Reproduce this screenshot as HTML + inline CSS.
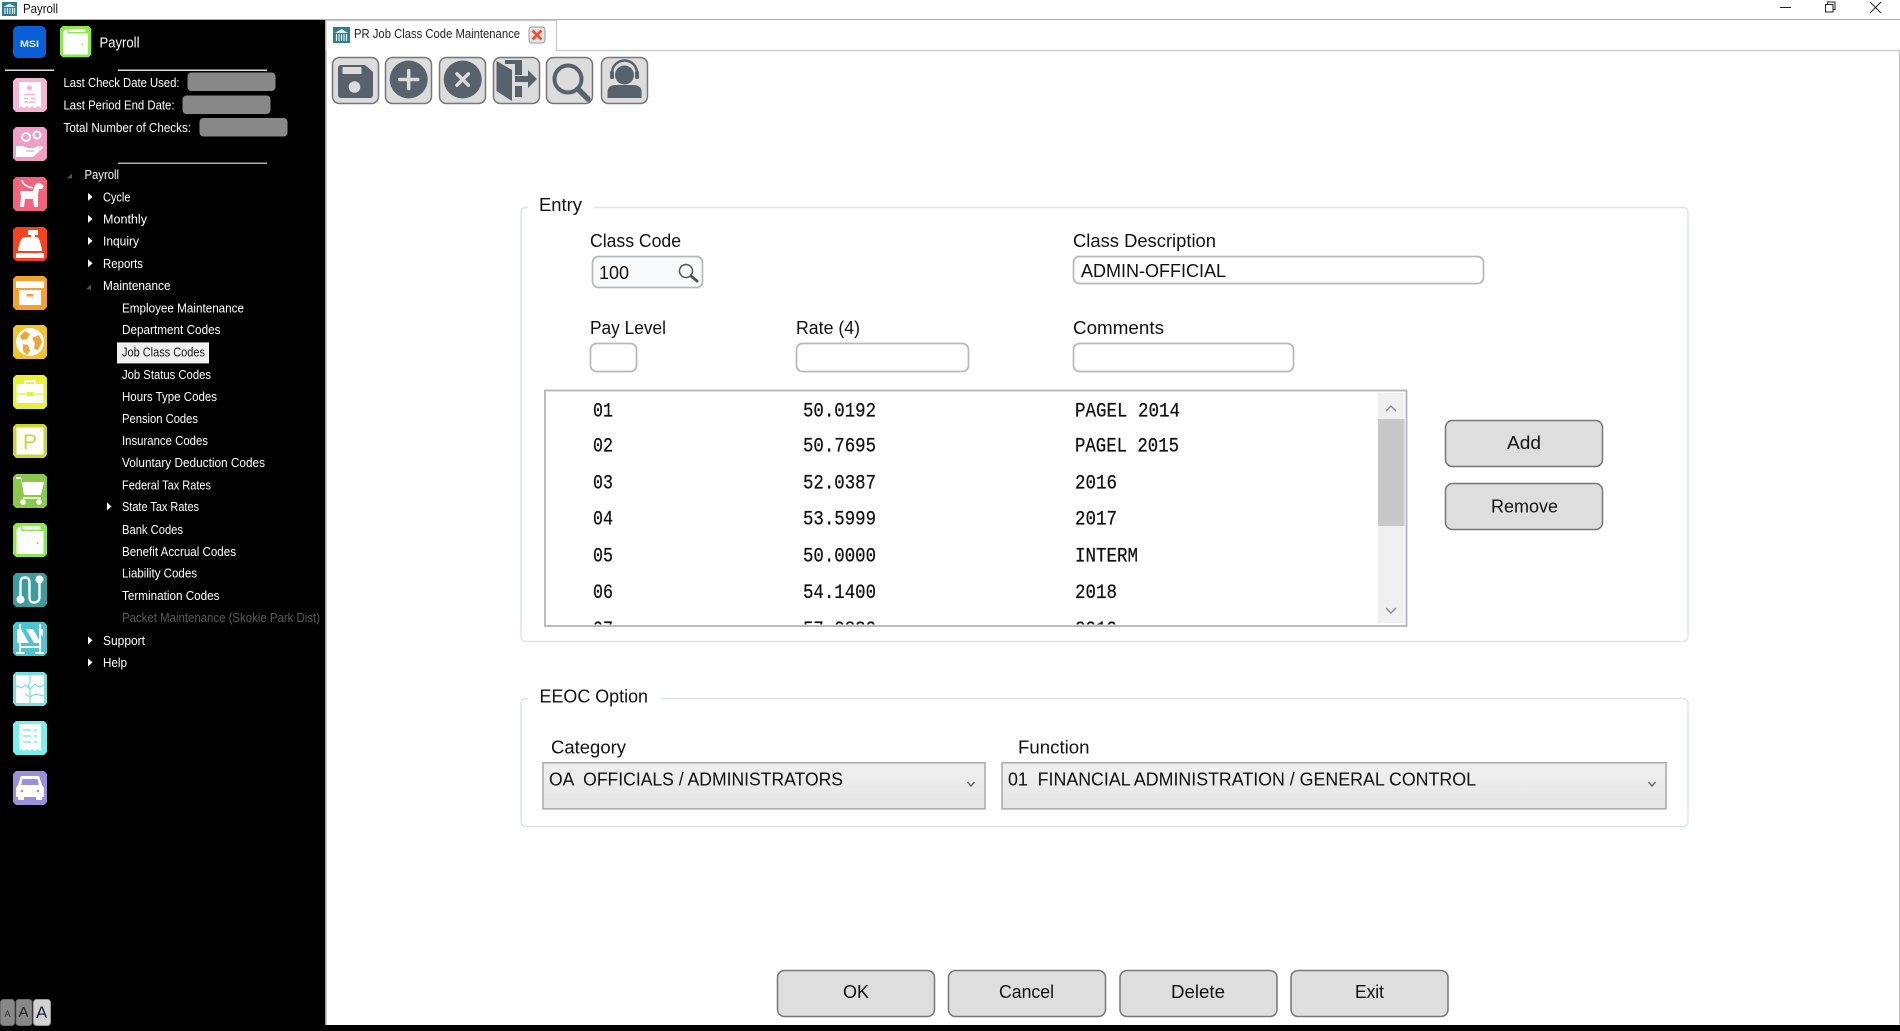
<!DOCTYPE html>
<html lang="en">
<head>
<meta charset="utf-8">
<title>Payroll</title>
<style>
html,body{margin:0;padding:0;width:1900px;height:1031px;overflow:hidden;background:#fff}
svg{display:block;position:absolute;left:0;top:0}
text{font-family:"Liberation Sans",sans-serif;fill:#111}
.s{font-size:12.5px;fill:#fff}
.m{font-size:18px}
.l{font-family:"Liberation Mono",monospace;font-size:20px;fill:#111;stroke:#111;stroke-width:.25}
.b{fill:#dedede;stroke:#777;stroke-width:1.5}
.i{fill:#fff;stroke:#b8b8bb;stroke-width:1.7}
.t{fill:#dcdcdc;stroke:#777;stroke-width:1.5}
.d{fill:#58626c}
</style>
</head>
<body>
<svg width="1900" height="1031" viewBox="0 0 1900 1031" xmlns="http://www.w3.org/2000/svg">
<defs>
<path id="o" d="M3 0H31L34 3V31L31 34H3L0 31V3Z"/>
<linearGradient id="g" x1="0" y1="0" x2="0" y2="1"><stop offset="0" stop-color="#f0f0f0"/><stop offset="1" stop-color="#e5e5e5"/></linearGradient>
<clipPath id="lc"><rect x="546" y="392" width="832" height="232.500"/></clipPath>
</defs>

<!-- title bar -->
<rect width="1900" height="1031" fill="#fff"/>
<rect x="0" y="19" width="1900" height="1" fill="#b0b0b0"/>
<g transform="translate(2,2)">
<rect width="15" height="14" fill="#2f7f92"/>
<path d="M1.5 5 7.5 1.5 13.5 5Z" fill="#dfeef2"/>
<path d="M3 6v6M5.5 6v6M8 6v6M10.5 6v6M12.5 6v6" stroke="#dfeef2" stroke-width="1.2"/>
</g>
<text x="23" y="13" class="s" style="fill:#111" textLength="35" lengthAdjust="spacingAndGlyphs">Payroll</text>
<path d="M1780 7.5H1791" stroke="#222" stroke-width="1"/>
<path d="M1825.5 4.5h7.5v7.500h-7.500zM1827.5 4.500v-2.500h7.500v7.500h-2" fill="none" stroke="#222" stroke-width="1"/>
<path d="M1870 2l11 11M1881 2l-11 11" stroke="#222" stroke-width="1"/>

<!-- sidebar -->
<rect x="0" y="20" width="325" height="1011" fill="#000"/>
<rect x="325" y="20" width="1.500" height="1005" fill="#9a9a9a"/>
<rect x="0" y="1025" width="1900" height="6" fill="#000"/>

<rect x="13" y="26" width="33" height="32" rx="5" fill="#0a5fd6"/>
<text x="20" y="47" style="font-size:9.500px;font-weight:bold;fill:#e8f0ff" textLength="19" lengthAdjust="spacingAndGlyphs">MSI</text>

<g transform="translate(60,26) scale(.92)">
<use href="#o" fill="#8ce84b"/>
<path d="M3.500 31V8Q3.500 4 8 3.500V8H30.500V31Z" fill="#fff"/>
<rect x="9.500" y="3.300" width="18" height="3.200" fill="#fff"/>
<circle cx="24.500" cy="20" r="1" fill="#8ce84b"/>
</g>
<text x="99.500" y="47.500" style="font-size:14.500px;fill:#fff" textLength="40" lengthAdjust="spacingAndGlyphs">Payroll</text>

<rect x="5" y="69.500" width="49" height="1.500" fill="#ddd"/>
<rect x="118" y="69.500" width="149" height="1.500" fill="#ddd"/>
<rect x="118" y="162.500" width="149" height="1.500" fill="#aaa"/>

<text x="63.500" y="87" class="s" textLength="116" lengthAdjust="spacingAndGlyphs">Last Check Date Used:</text>
<text x="63.500" y="109.500" class="s" textLength="111" lengthAdjust="spacingAndGlyphs">Last Period End Date:</text>
<text x="63.500" y="132" class="s" textLength="127.500" lengthAdjust="spacingAndGlyphs">Total Number of Checks:</text>
<rect x="187.500" y="72.500" width="88" height="18.500" rx="4" fill="#888"/>
<rect x="182.500" y="95.500" width="88" height="18.500" rx="4" fill="#888"/>
<rect x="199.500" y="118" width="88" height="18.500" rx="4" fill="#888"/>

<!-- sidebar icons -->
<g transform="translate(13,78)"><use href="#o" fill="#f5b5d5"/>
<path d="M6 4H28V30L25 28 22 30 19 28 16.500 30 14 28 11 30 8.500 28 6 30Z" fill="#fff"/>
<circle cx="16.500" cy="10" r="2.500" fill="#f5b5d5"/>
<path d="M11 16.500h11M11 20.500h4M18 20.500h5M11 24h11" stroke="#f5b5d5" stroke-width="1.400"/></g>

<g transform="translate(13,127)"><use href="#o" fill="#ee9fc3"/>
<circle cx="13" cy="10" r="4" fill="none" stroke="#fff" stroke-width="2"/>
<circle cx="24" cy="8" r="3.500" fill="none" stroke="#fff" stroke-width="2"/>
<path d="M3 19H10L15 21H21L25 19 31 20 20 30H3Z" fill="#fff"/>
<path d="M13 24H21" stroke="#ee9fc3" stroke-width="1.200"/></g>

<g transform="translate(13,177)"><use href="#o" fill="#f2637e"/>
<path d="M7 14H20L22 8Q24 5 27 6L31 9 29 12H26L25 18V30H21L20 22H12L11 30H7L8 20Z" fill="#fff"/>
<path d="M9 3Q10 9 20 11" fill="none" stroke="#fff" stroke-width="1.700"/></g>

<g transform="translate(13,227)"><use href="#o" fill="#f5421f"/>
<path d="M15 3H25V8H22V10H18V8H15Z" fill="#fff"/>
<path d="M11 10H24Q27 11 29 24H5Q7 11 11 10Z" fill="#fff"/>
<rect x="3" y="26" width="28" height="5" fill="#fff"/></g>

<g transform="translate(13,276)"><use href="#o" fill="#f5a030"/>
<rect x="3" y="5" width="28" height="7" fill="#fff"/>
<rect x="6" y="14" width="22" height="15" fill="#fff"/>
<rect x="13.500" y="18" width="7" height="2.500" fill="#f5a030"/></g>

<g transform="translate(13,325)"><use href="#o" fill="#f2c230"/>
<circle cx="17" cy="17" r="14" fill="#fff"/>
<path d="M7 11 12 6 17 9 14 14 9 15ZM19 13 26 10 29 17 25 25 21 24 22 18ZM10 19 15 20 17 26 14 30 10 26Z" fill="#f2a530"/></g>

<g transform="translate(13,375)"><use href="#o" fill="#e8f03a"/>
<path d="M11 9V5H23V9H21V7H13V9Z" fill="#fff"/>
<rect x="3.500" y="9" width="27" height="19" rx="1" fill="#fff"/>
<path d="M3.500 19H13.500M20.500 19H30.500" stroke="#e8f03a" stroke-width="1.200"/>
<rect x="13.500" y="17" width="7" height="4" fill="#e8f03a"/></g>

<g transform="translate(13,424)"><use href="#o" fill="#cdd535"/>
<rect x="3.500" y="3.500" width="27" height="27" fill="#fff"/>
<text x="10" y="25" style="font-size:21px;fill:#cdd535" textLength="14" lengthAdjust="spacingAndGlyphs">P</text></g>

<g transform="translate(13,474)"><use href="#o" fill="#8cc84b"/>
<path d="M3 3H8L9 8H31L28 21H11L8 5H3Z" fill="#fff"/>
<path d="M10 24H28" stroke="#fff" stroke-width="1.500"/>
<circle cx="10" cy="28" r="2.800" fill="#fff"/><circle cx="26" cy="28" r="2.800" fill="#fff"/></g>

<g transform="translate(13,523)"><use href="#o" fill="#8ce84b"/>
<path d="M3.500 31V8Q3.500 4 8 3.500V8H30.500V31Z" fill="#fff"/>
<rect x="9.500" y="3.300" width="18" height="3.200" fill="#fff"/>
<circle cx="24.500" cy="20" r="1" fill="#8ce84b"/></g>

<g transform="translate(13,573)"><use href="#o" fill="#3c9ca0"/>
<circle cx="7.500" cy="26.500" r="4" fill="#fff"/><circle cx="26.500" cy="6.500" r="4" fill="#fff"/>
<path d="M7.500 25V10C7.500 6 9 4.500 12 4.500S16.500 6 16.500 10V24C16.500 28 18 29.500 21 29.500S26.500 28 26.500 24V7" fill="none" stroke="#fff" stroke-width="2.400"/></g>

<g transform="translate(13,622)"><use href="#o" fill="#4ec4d0"/>
<rect x="4" y="7" width="26" height="14" fill="#fff"/>
<path d="M8 7H13L21 21H16ZM20 7H25L30 15V21H28Z" fill="#4ec4d0"/>
<path d="M7 2V32M27 2V32" stroke="#fff" stroke-width="2"/>
<path d="M3 31H12M22 31H31M7 25H27" stroke="#fff" stroke-width="2"/></g>

<g transform="translate(13,672)"><use href="#o" fill="#78e0e0"/>
<rect x="3" y="3" width="28" height="28" fill="#fff"/>
<path d="M3 14 9 16 12 13 17 17 22 12 26 15 31 13M17 3V10L15 13 17 17V31M12 22 17 25 22 22 31 24" fill="none" stroke="#78e0e0" stroke-width="1.200"/></g>

<g transform="translate(13,721)"><use href="#o" fill="#78f0f0"/>
<path d="M6 3H28V30L25 28 22 30 19 28 16.500 30 14 28 11 30 8.500 28 6 30Z" fill="#fff"/>
<path d="M10 9H18M21 9H24M10 15H18M21 15H24M10 21H18M21 21H24" stroke="#78f0f0" stroke-width="1.400"/></g>

<g transform="translate(13,771)"><use href="#o" fill="#9a90d8"/>
<path d="M8 5H26L29 14 31 17V26H3V17L5 14Z" fill="#fff"/>
<path d="M9.500 8H24.500L26 14H8Z" fill="#9a90d8"/>
<circle cx="9" cy="20" r="1.300" fill="#9a90d8"/><circle cx="25" cy="20" r="1.300" fill="#9a90d8"/>
<rect x="5" y="26" width="6" height="3" fill="#fff"/><rect x="23" y="26" width="6" height="3" fill="#fff"/></g>

<!-- tree -->
<g transform="translate(0,-.6)">
<path d="M72 174v5h-5z" fill="#555"/>
<path d="M91 285v5h-5z" fill="#555"/>
<g fill="#fff">
<path d="M88 193.500l4.500 4-4.500 4z"/>
<path d="M88 215.500l4.500 4-4.500 4z"/>
<path d="M88 237.500l4.500 4-4.500 4z"/>
<path d="M88 260l4.500 4-4.500 4z"/>
<path d="M107 503l4.500 4-4.500 4z"/>
<path d="M88 637l4.500 4-4.500 4z"/>
<path d="M88 659l4.500 4-4.500 4z"/>
</g>
<text x="84.500" y="179.500" class="s" textLength="34.500" lengthAdjust="spacingAndGlyphs">Payroll</text>
<text x="103" y="202" class="s" textLength="27.500" lengthAdjust="spacingAndGlyphs">Cycle</text>
<text x="103" y="224" class="s" textLength="44" lengthAdjust="spacingAndGlyphs">Monthly</text>
<text x="103" y="246" class="s" textLength="36" lengthAdjust="spacingAndGlyphs">Inquiry</text>
<text x="103" y="268.500" class="s" textLength="40" lengthAdjust="spacingAndGlyphs">Reports</text>
<text x="103" y="290.500" class="s" textLength="67.500" lengthAdjust="spacingAndGlyphs">Maintenance</text>
<text x="122" y="313" class="s" textLength="122" lengthAdjust="spacingAndGlyphs">Employee Maintenance</text>
<text x="122" y="334.500" class="s" textLength="98.500" lengthAdjust="spacingAndGlyphs">Department Codes</text>
<rect x="117" y="343" width="92" height="21" fill="#f0f0f0"/>
<text x="122" y="357" class="s" style="fill:#111" textLength="83" lengthAdjust="spacingAndGlyphs">Job Class Codes</text>
<text x="122" y="379.500" class="s" textLength="89" lengthAdjust="spacingAndGlyphs">Job Status Codes</text>
<text x="122" y="401.500" class="s" textLength="95" lengthAdjust="spacingAndGlyphs">Hours Type Codes</text>
<text x="122" y="423.500" class="s" textLength="76" lengthAdjust="spacingAndGlyphs">Pension Codes</text>
<text x="122" y="445.500" class="s" textLength="86" lengthAdjust="spacingAndGlyphs">Insurance Codes</text>
<text x="122" y="467.500" class="s" textLength="143" lengthAdjust="spacingAndGlyphs">Voluntary Deduction Codes</text>
<text x="122" y="490" class="s" textLength="89" lengthAdjust="spacingAndGlyphs">Federal Tax Rates</text>
<text x="122" y="511.500" class="s" textLength="77" lengthAdjust="spacingAndGlyphs">State Tax Rates</text>
<text x="122" y="534.500" class="s" textLength="61" lengthAdjust="spacingAndGlyphs">Bank Codes</text>
<text x="122" y="556.500" class="s" textLength="114" lengthAdjust="spacingAndGlyphs">Benefit Accrual Codes</text>
<text x="122" y="578" class="s" textLength="75" lengthAdjust="spacingAndGlyphs">Liability Codes</text>
<text x="122" y="600.500" class="s" textLength="97.500" lengthAdjust="spacingAndGlyphs">Termination Codes</text>
<text x="122" y="622.500" class="s" style="fill:#5a5a5a" textLength="198" lengthAdjust="spacingAndGlyphs">Packet Maintenance (Skokie Park Dist)</text>
<text x="103" y="645.500" class="s" textLength="42" lengthAdjust="spacingAndGlyphs">Support</text>
<text x="103" y="667.500" class="s" textLength="24" lengthAdjust="spacingAndGlyphs">Help</text>
</g>

<!-- AA -->
<rect x="0.500" y="999.500" width="14" height="26" rx="3" fill="#888" stroke="#6c6c6c"/>
<rect x="16" y="999.500" width="16" height="26" rx="3" fill="#888" stroke="#6c6c6c"/>
<rect x="33.500" y="999.500" width="17" height="26" rx="3" fill="#d2d2d2" stroke="#999"/>
<text x="4.500" y="1017" style="font-size:9px;fill:#333">A</text>
<text x="18.500" y="1017" style="font-size:15px;fill:#222">A</text>
<text x="36" y="1018" style="font-size:17px;fill:#123">A</text>

<!-- tab -->
<path d="M326 51V20.500H556.500V50.500H1899.500V1025" fill="none" stroke="#c6c6c6" stroke-width="1.200"/>
<g transform="translate(333,27)">
<rect width="17" height="16" fill="#2f7f92"/>
<path d="M2 6 8.500 2 15 6Z" fill="#dfeef2"/>
<path d="M3.500 7v7M6 7v7M8.500 7v7M11 7v7M13.500 7v7" stroke="#dfeef2" stroke-width="1.200"/>
</g>
<text x="354" y="38" class="s" style="fill:#222" textLength="166" lengthAdjust="spacingAndGlyphs">PR Job Class Code Maintenance</text>
<rect x="529" y="27" width="16" height="16" rx="3" fill="#e4e4e4" stroke="#999"/>
<path d="M532.500 30.500l9 9M541.500 30.500l-9 9" stroke="#e8503e" stroke-width="2.800"/>

<!-- toolbar -->
<rect x="332.500" y="57.500" width="46" height="46" rx="7" class="t"/>
<rect x="385.500" y="57.500" width="46" height="46" rx="7" class="t"/>
<rect x="439.500" y="57.500" width="46" height="46" rx="7" class="t"/>
<rect x="493.500" y="57.500" width="46" height="46" rx="7" class="t"/>
<rect x="546.500" y="57.500" width="46" height="46" rx="7" class="t"/>
<rect x="601.500" y="57.500" width="46" height="46" rx="7" class="t"/>

<path class="d" d="M341 65H365L373 72V95A3 3 0 0 1 370 98H341A3 3 0 0 1 338 95V68A3 3 0 0 1 341 65Z"/>
<rect x="342.500" y="67" width="19" height="7" rx="1" fill="#dcdcdc"/>
<circle cx="354.500" cy="87" r="5.800" fill="#dcdcdc"/>

<circle cx="408.700" cy="79.500" r="19" class="d"/>
<path d="M408.700 70.500v18M399.700 79.500h18" stroke="#dcdcdc" stroke-width="3.500" stroke-linecap="round"/>

<circle cx="462.700" cy="79.500" r="19" class="d"/>
<path d="M457 73.800l11.400 11.400M468.400 73.800l-11.400 11.400" stroke="#dcdcdc" stroke-width="3.500" stroke-linecap="round"/>

<path class="d" d="M496.500 61 512 70V101L496.500 91Z"/>
<path class="d" d="M505 60H522V75H515V64H505ZM515 86H522V97H515Z"/>
<path class="d" d="M515 76H528V70L537 79 528 88V82H515Z"/>

<circle cx="568" cy="79" r="13.500" fill="none" stroke="#58626c" stroke-width="4"/>
<path d="M578 89 588 99" stroke="#58626c" stroke-width="5.500" stroke-linecap="round"/>

<circle cx="624.500" cy="75" r="9.500" class="d"/>
<path d="M612 77V73A12.500 12.500 0 0 1 637 73V77" fill="none" stroke="#58626c" stroke-width="2.500"/>
<rect x="610" y="71" width="4" height="8" rx="1.500" class="d"/>
<rect x="635" y="71" width="4" height="8" rx="1.500" class="d"/>
<path class="d" d="M607.500 98V92Q607.500 85 616 85H633Q641.500 85 641.500 92V98Z"/>

<!-- Entry -->
<path d="M528 207.500H526A5 5 0 0 0 521 212.500V636.500A5 5 0 0 0 526 641.500H1683A5 5 0 0 0 1688 636.500V212.500A5 5 0 0 0 1683 207.500H594" fill="none" stroke="#dde5ea" stroke-width="1.500"/>
<text x="539" y="211" class="m" textLength="43" lengthAdjust="spacingAndGlyphs">Entry</text>

<text x="590" y="247" class="m" textLength="91" lengthAdjust="spacingAndGlyphs">Class Code</text>
<rect x="592.500" y="256.500" width="110" height="31" rx="6" fill="#f8f9fb" stroke="#b8b8bb" stroke-width="1.700"/>
<text x="599" y="279" class="m" textLength="30" lengthAdjust="spacingAndGlyphs">100</text>
<circle cx="686" cy="271" r="6.500" fill="none" stroke="#555" stroke-width="1.500"/>
<path d="M691 276 697 281" stroke="#555" stroke-width="3" stroke-linecap="round"/>

<text x="1073" y="247" class="m" textLength="143" lengthAdjust="spacingAndGlyphs">Class Description</text>
<rect x="1073.500" y="256.500" width="410" height="27" rx="6" class="i"/>
<text x="1081" y="276.800" class="m" textLength="145" lengthAdjust="spacingAndGlyphs">ADMIN-OFFICIAL</text>

<text x="590" y="334" class="m" textLength="76" lengthAdjust="spacingAndGlyphs">Pay Level</text>
<rect x="590.500" y="343.500" width="46" height="28" rx="6" class="i"/>
<text x="796" y="334" class="m" textLength="64" lengthAdjust="spacingAndGlyphs">Rate (4)</text>
<rect x="796.500" y="343.500" width="172" height="28" rx="6" class="i"/>
<text x="1073" y="334" class="m" textLength="91" lengthAdjust="spacingAndGlyphs">Comments</text>
<rect x="1073.500" y="343.500" width="220" height="28" rx="6" class="i"/>

<!-- list -->
<rect x="545" y="390.500" width="861.500" height="235.500" fill="#fff" stroke="#b2b2b9" stroke-width="1.800"/>
<rect x="1378" y="393" width="26.500" height="230" fill="#f0f0f0"/>
<rect x="1378" y="419" width="26.500" height="107" fill="#c8c8c8"/>
<path d="M1386 411l5-5 5 5M1386 608l5 5 5-5" fill="none" stroke="#8a8a8a" stroke-width="1.400"/>
<g clip-path="url(#lc)">
<text x="593" y="416.500" class="l" textLength="20" lengthAdjust="spacingAndGlyphs">01</text>
<text x="803" y="416.500" class="l" textLength="73" lengthAdjust="spacingAndGlyphs">50.0192</text>
<text x="1075" y="416.500" class="l" textLength="105" lengthAdjust="spacingAndGlyphs">PAGEL 2014</text>
<text x="593" y="451.500" class="l" textLength="20" lengthAdjust="spacingAndGlyphs">02</text>
<text x="803" y="451.500" class="l" textLength="73" lengthAdjust="spacingAndGlyphs">50.7695</text>
<text x="1075" y="451.500" class="l" textLength="104" lengthAdjust="spacingAndGlyphs">PAGEL 2015</text>
<text x="593" y="488.500" class="l" textLength="20" lengthAdjust="spacingAndGlyphs">03</text>
<text x="803" y="488.500" class="l" textLength="73" lengthAdjust="spacingAndGlyphs">52.0387</text>
<text x="1075" y="488.500" class="l" textLength="42" lengthAdjust="spacingAndGlyphs">2016</text>
<text x="593" y="524.500" class="l" textLength="20" lengthAdjust="spacingAndGlyphs">04</text>
<text x="803" y="524.500" class="l" textLength="73" lengthAdjust="spacingAndGlyphs">53.5999</text>
<text x="1075" y="524.500" class="l" textLength="42" lengthAdjust="spacingAndGlyphs">2017</text>
<text x="593" y="561.500" class="l" textLength="20" lengthAdjust="spacingAndGlyphs">05</text>
<text x="803" y="561.500" class="l" textLength="73" lengthAdjust="spacingAndGlyphs">50.0000</text>
<text x="1075" y="561.500" class="l" textLength="63" lengthAdjust="spacingAndGlyphs">INTERM</text>
<text x="593" y="598" class="l" textLength="20" lengthAdjust="spacingAndGlyphs">06</text>
<text x="803" y="598" class="l" textLength="73" lengthAdjust="spacingAndGlyphs">54.1400</text>
<text x="1075" y="598" class="l" textLength="42" lengthAdjust="spacingAndGlyphs">2018</text>
<text x="593" y="635" class="l" textLength="20" lengthAdjust="spacingAndGlyphs">07</text>
<text x="803" y="635" class="l" textLength="73" lengthAdjust="spacingAndGlyphs">57.0830</text>
<text x="1075" y="635" class="l" textLength="42" lengthAdjust="spacingAndGlyphs">2019</text>
</g>

<rect x="1445.500" y="420.500" width="157" height="46" rx="7" class="b"/>
<text x="1507" y="449" class="m" textLength="34" lengthAdjust="spacingAndGlyphs">Add</text>
<rect x="1445.500" y="483.500" width="157" height="46" rx="7" class="b"/>
<text x="1491" y="512.500" class="m" textLength="67" lengthAdjust="spacingAndGlyphs">Remove</text>

<!-- EEOC -->
<path d="M528 698.500H526A5 5 0 0 0 521 703.500V821.500A5 5 0 0 0 526 826.500H1683A5 5 0 0 0 1688 821.500V703.500A5 5 0 0 0 1683 698.500H661" fill="none" stroke="#dde5ea" stroke-width="1.500"/>
<text x="539.500" y="702.300" class="m" textLength="108.500" lengthAdjust="spacingAndGlyphs">EEOC Option</text>
<text x="551" y="753.500" class="m" textLength="75" lengthAdjust="spacingAndGlyphs">Category</text>
<text x="1018" y="753.500" class="m" textLength="71.500" lengthAdjust="spacingAndGlyphs">Function</text>
<rect x="543" y="762.800" width="442" height="46" fill="url(#g)" stroke="#aeaeae" stroke-width="1.600"/>
<text x="549" y="785.500" class="m" textLength="294" lengthAdjust="spacingAndGlyphs" xml:space="preserve">OA  OFFICIALS / ADMINISTRATORS</text>
<path d="M967.500 782l3.500 4 3.500-4" fill="none" stroke="#666" stroke-width="1.400"/>
<rect x="1002" y="762.800" width="664" height="46" fill="url(#g)" stroke="#aeaeae" stroke-width="1.600"/>
<text x="1008" y="785.500" class="m" textLength="468" lengthAdjust="spacingAndGlyphs" xml:space="preserve">01  FINANCIAL ADMINISTRATION / GENERAL CONTROL</text>
<path d="M1648.500 782l3.500 4 3.500-4" fill="none" stroke="#666" stroke-width="1.400"/>

<!-- bottom buttons -->
<rect x="777.500" y="970.500" width="157" height="46" rx="7" class="b"/>
<text x="843" y="998" class="m" textLength="26" lengthAdjust="spacingAndGlyphs">OK</text>
<rect x="948.500" y="970.500" width="157" height="46" rx="7" class="b"/>
<text x="999" y="998" class="m" textLength="55" lengthAdjust="spacingAndGlyphs">Cancel</text>
<rect x="1120" y="970.500" width="157" height="46" rx="7" class="b"/>
<text x="1171" y="998" class="m" textLength="54" lengthAdjust="spacingAndGlyphs">Delete</text>
<rect x="1291" y="970.500" width="157" height="46" rx="7" class="b"/>
<text x="1355" y="998" class="m" textLength="29" lengthAdjust="spacingAndGlyphs">Exit</text>
</svg>
</body>
</html>
